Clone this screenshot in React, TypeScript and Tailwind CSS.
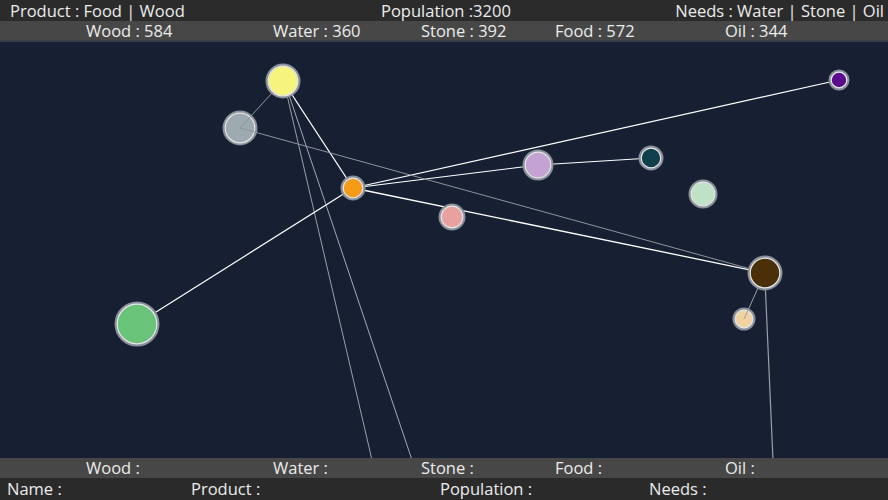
import React from "react";

const font = { fontFamily: '"Open Sans", "Noto Sans", sans-serif' };

type Node = { x: number; y: number; r: number; fill: string };
const nodes: Node[] = [
  { x: 283, y: 81, r: 15, fill: "#f6f47c" },
  { x: 240, y: 128, r: 15, fill: "#9eaab1" },
  { x: 353, y: 188, r: 10, fill: "#f59b17" },
  { x: 452, y: 217, r: 11, fill: "#e9a09e" },
  { x: 538, y: 165, r: 13, fill: "#c4a2d4" },
  { x: 651, y: 158, r: 10, fill: "#0e3f4a" },
  { x: 839, y: 80, r: 8, fill: "#5c0a8e" },
  { x: 703, y: 194, r: 12, fill: "#bfe2c6" },
  { x: 765, y: 273, r: 15, fill: "#4a2f08" },
  { x: 744, y: 319, r: 9, fill: "#f1d3a0" },
  { x: 137, y: 324, r: 20, fill: "#69c479" },
];

type Line = [number, number, number, number, string, number];
const under: Line[] = [
  [283, 81, 353, 188, "#ffffff", 1.3],
  [287, 95, 372, 460, "#9aa0a8", 1],
  [289, 95, 412, 460, "#a4aab2", 1],
  [353, 188, 137, 324, "#ffffff", 1.2],
  [353, 188, 839, 80, "#ffffff", 1.2],
  [353, 188, 538, 165, "#ffffff", 1.2],
  [538, 165, 651, 158, "#ffffff", 1.2],
  [353, 188, 765, 273, "#ffffff", 1.3],
  [765, 280, 773, 460, "#9aa0a8", 1.2],
];
const over: Line[] = [
  [240, 128, 272.2, 92.8, "#8f959d", 1],
  [240, 128, 749.6, 268.7, "#8d939c", 1],
  [758, 288, 744, 319, "#9aa0a8", 1],
];

function Row({ items, offsets }: { items: string[]; offsets: number[] }) {
  return (
    <div className="flex">
      {items.map((t, i) => (
        <span key={i} className="whitespace-pre shrink-0" style={{ width: offsets[i] }}>
          {t}
        </span>
      ))}
    </div>
  );
}

export default function App() {
  const top = [86, 187, 148, 134, 170, 100];
  return (
    <div
      className="w-[888px] h-[500px] flex flex-col bg-[#172033] text-[#ececec] text-[16.5px] overflow-hidden"
      style={font}
    >
      <div className="h-[21px] leading-[21px] bg-[#2b2b2b] flex items-center pl-[10px] pr-[4px]">
        <span className="w-[371px] shrink-0">Product : Food | Wood</span>
        <span>Population :3200</span>
        <span className="ml-auto">Needs : Water | Stone | Oil</span>
      </div>
      <div className="h-[21px] leading-[19px] bg-[#474747] border-b-2 border-[#3a3e47] flex items-center">
        <Row items={["", "Wood : 584", "Water : 360", "Stone : 392", "Food : 572", "Oil : 344"]} offsets={top} />
      </div>
      <div className="flex-1 relative">
        <svg className="absolute inset-0" width="888" height="416" viewBox="0 42 888 416">
          {under.map(([x1, y1, x2, y2, c, w], i) => (
            <line key={i} x1={x1} y1={y1} x2={x2} y2={y2} stroke={c} strokeWidth={w} />
          ))}
          {nodes.map((n, i) => (
            <g key={i}>
              <circle cx={n.x} cy={n.y} r={n.r + 1} fill={n.fill} stroke="#8a8f98" strokeWidth={3} />
              <circle cx={n.x} cy={n.y} r={n.r - 0.2} fill="none" stroke="#e6e8ea" strokeWidth={1.2} />
            </g>
          ))}
          {over.map(([x1, y1, x2, y2, c, w], i) => (
            <line key={"o" + i} x1={x1} y1={y1} x2={x2} y2={y2} stroke={c} strokeWidth={w} />
          ))}
        </svg>
      </div>
      <div className="h-[20px] leading-[20px] bg-[#474747] flex items-center">
        <Row items={["", "Wood :", "Water :", "Stone :", "Food :", "Oil :"]} offsets={top} />
      </div>
      <div className="h-[22px] leading-[22px] bg-[#2a2a2a] flex items-center">
        <Row items={["", "Name :", "Product :", "Population :", "Needs :"]} offsets={[7, 184, 249, 209, 200]} />
      </div>
    </div>
  );
}
